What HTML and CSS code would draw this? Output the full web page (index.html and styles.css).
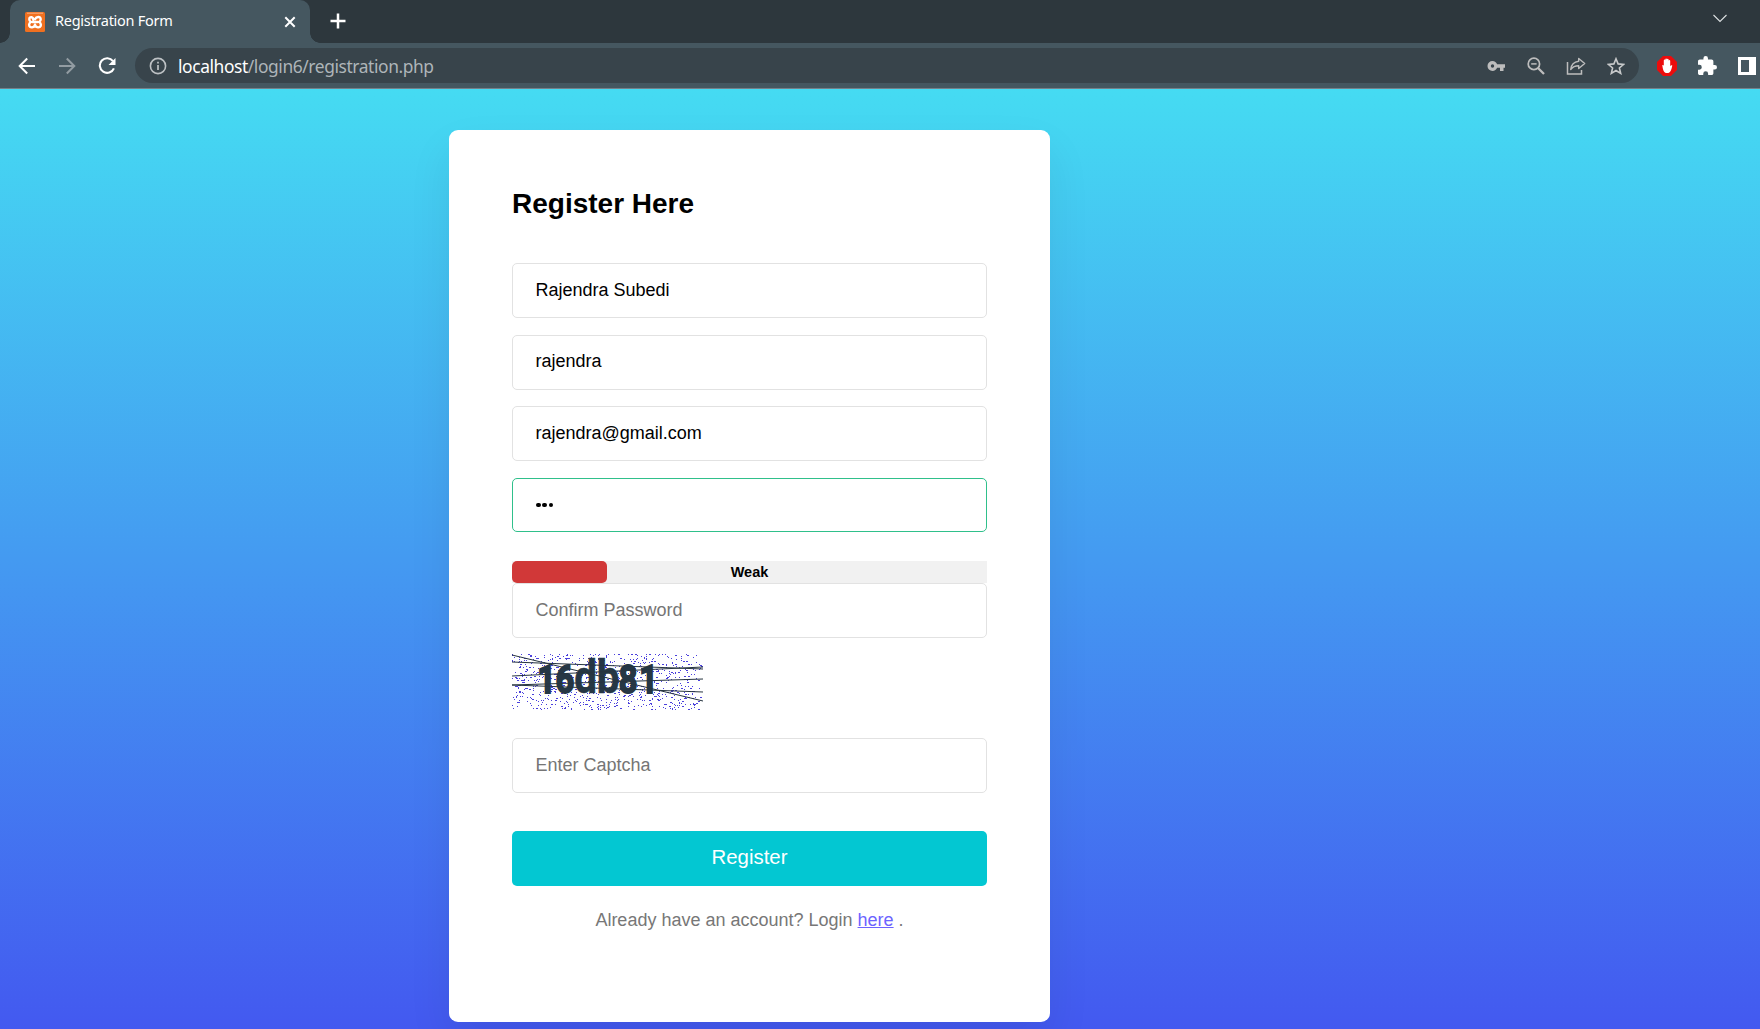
FILE: index.html
```html
<!DOCTYPE html>
<html lang="en">
<head>
<meta charset="utf-8">
<title>Registration Form</title>
<link rel="stylesheet" href="styles.css">
</head>
<body>
<header class="browser">
  <div class="tabstrip">
    <div class="tab">
      <svg class="favicon" width="20" height="20" viewBox="0 0 20 20"><rect width="20" height="20" rx="1.5" fill="#f07020"/><path d="M2 1.2h16" stroke="#f7ae80" stroke-width="1"/><path d="M8.200 7.600C8.800 5.200 4.300 4 4.300 7.200c0 1.500.8 2.300 1.600 2.800-.9.500-1.800 1.300-1.800 2.800 0 3.800 5.900 3 5.900-.2 0 3.200 5.900 4 5.900.2 0-1.500-.9-2.300-1.800-2.800.8-.5 1.600-1.300 1.600-2.800 0-3.200-4.500-2.700-5.700 0M7.500 10h5" fill="none" stroke="#fff" stroke-width="2.400" stroke-linecap="round" stroke-linejoin="round"/></svg>
      <span class="tab-title">Registration Form</span>
      <svg class="tab-close" width="12" height="12" viewBox="0 0 12 12"><path d="M1.300 1.300l9.400 9.400M10.700 1.300l-9.400 9.400" stroke="#fff" stroke-width="2"/></svg>
    </div>
    <svg class="new-tab" width="16" height="16" viewBox="0 0 16 16"><path d="M8 .5v15M.5 8h15" stroke="#fff" stroke-width="2.500"/></svg>
    <svg class="tab-search" width="14" height="9" viewBox="0 0 14 9"><path d="M.5 1l6.500 6.500L13.500 1" fill="none" stroke="#dde1e3" stroke-width="1.100"/></svg>
  </div>
  <div class="toolbar">
    <svg class="back" width="18" height="18" viewBox="0 0 18 18"><path d="M17 9H2M9.200 1.500L1.700 9l7.500 7.500" fill="none" stroke="#fff" stroke-width="2"/></svg>
    <svg class="forward" width="18" height="18" viewBox="0 0 18 18"><path d="M1 9h15M8.800 1.500L16.300 9l-7.500 7.500" fill="none" stroke="#929ca2" stroke-width="2"/></svg>
    <svg class="reload" width="18" height="18" viewBox="0 0 18 18"><path d="M15 4.200A7.300 7.300 0 1 0 15.900 11.300" fill="none" stroke="#fff" stroke-width="2.100"/><path d="M17.500 1v7h-7z" fill="#fff"/></svg>
    <div class="address">
      <svg width="18" height="18" viewBox="0 0 18 18"><circle cx="9" cy="9" r="7.600" fill="none" stroke="#bdc1c4" stroke-width="1.600"/><path d="M9 8v5M9 4.700v1.700" stroke="#bdc1c4" stroke-width="1.700"/></svg>
      <span class="url"><b>localhost</b>/login6/registration.php</span>
      <svg class="key" width="18" height="12" viewBox="0 0 18 12"><path d="M5.500 1a5 5 0 0 0 0 10c2.200 0 3.900-1.300 4.600-3.200H13V11h3.500V7.800H18V4.200h-7.900C9.400 2.300 7.700 1 5.500 1zm0 3.300a1.700 1.700 0 1 1 0 3.400 1.700 1.700 0 0 1 0-3.400z" fill="#bdbdbd" fill-rule="evenodd"/></svg>
      <svg class="magnify" width="18" height="18" viewBox="0 0 18 18"><circle cx="6.900" cy="6.900" r="5.700" fill="none" stroke="#bdbdbd" stroke-width="1.700"/><path d="M11 11l6 6" stroke="#bdbdbd" stroke-width="2.300"/><path d="M4.200 6.900h5.400" stroke="#bdbdbd" stroke-width="1.500"/></svg>
      <svg class="share" width="20" height="18" viewBox="0 0 20 18"><path d="M1.500 5v12h14v-4" fill="none" stroke="#bdbdbd" stroke-width="1.500"/><path d="M12.700 1.500l6 5-6 5V8.800c-3.900 0-6.200 1.300-8 3.700.5-4.600 3.200-7.700 8-8.300z" fill="none" stroke="#bdbdbd" stroke-width="1.400" stroke-linejoin="round"/></svg>
      <svg class="star" width="18" height="18" viewBox="0 0 18 18"><path d="M9 1.800l2.100 5.100 5.500.5-4.200 3.600 1.300 5.400L9 13.500l-4.700 2.900L5.600 11 1.400 7.400l5.500-.5z" fill="none" stroke="#c7c9ca" stroke-width="1.600"/></svg>
    </div>
    <svg class="blocker" width="20" height="20" viewBox="0 0 20 20"><path d="M6 0h8l6 6v8l-6 6H6l-6-6V6z" fill="#ec0c0c"/><path d="M5.300 9.200c.7-.5 1.300-.1 1.500.5V4.400c0-1.100 1.500-1.100 1.500 0V3.300c0-1.200 1.600-1.200 1.600 0v.3c0-1.300 1.700-1.300 1.700 0v1.200c0-1.100 1.600-1.100 1.600 0v5.400c.5-1 1.300-1.300 2.100-.8-.7 3.600-1.700 7.600-5.100 7.600-3.700 0-4.300-3.800-4.900-7.800z" fill="#fff"/></svg>
    <svg class="puzzle" width="19" height="19" viewBox="2 1 21 21"><path d="M20.500 11H19V7c0-1.100-.9-2-2-2h-4V3.500a2.500 2.500 0 0 0-5 0V5H4c-1.100 0-2 .9-2 2v3.800h1.500a2.700 2.700 0 0 1 0 5.400H2V20c0 1.100.9 2 2 2h3.800v-1.500a2.700 2.700 0 0 1 5.400 0V22H17c1.100 0 2-.9 2-2v-4h1.500a2.500 2.500 0 0 0 0-5z" fill="#fff"/></svg>
    <svg class="panel" width="18" height="18" viewBox="0 0 18 18"><path d="M0 0h18v18H0zM3 3v12h8V3z" fill="#fff" fill-rule="evenodd"/></svg>
  </div>
</header>
<main class="page">
  <form class="card">
    <h1>Register Here</h1>
    <input class="field" type="text" value="Rajendra Subedi">
    <input class="field" type="text" value="rajendra">
    <input class="field" type="text" value="rajendra@gmail.com">
    <div class="field active"><i></i><i></i><i></i></div>
    <div class="strength"><div class="strength-fill"></div><span>Weak</span></div>
    <input class="field confirm" type="text" placeholder="Confirm Password">
    <svg class="captcha" width="191" height="57" viewBox="0 0 191 57">
      <g id="noise"></g>
      <text class="code" transform="scale(.86 1)" y="39" x="29.500 50.500 72.500 98.500 124 148">16<tspan class="tall">db</tspan>81</text>
      <path class="strokes" d="M0 1l191 46M0 8l191 7M0 22l191-9M0 31l191 7M0 31l191-6"/>
    </svg>
    <input class="field enter" type="text" placeholder="Enter Captcha">
    <button class="submit" type="button">Register</button>
    <p>Already have an account? Login <a href="#">here</a> .</p>
  </form>
</main>
<script src="captcha.js"></script>
</body>
</html>
```
FILE: styles.css
```css
* { box-sizing: border-box; }
body { margin: 0; height: 1029px; overflow: hidden; display: flex; flex-direction: column; font-family: "Liberation Sans", Arial, sans-serif; }
svg { display: block; flex: none; }
.browser { flex: none; height: 89px; background: #455760; border-bottom: 1px solid #74818a; font-family: "Noto Sans", "Open Sans", sans-serif; }
.tabstrip { height: 43px; background: #2d373d; display: flex; align-items: flex-start; padding-left: 10px; }
.tab { position: relative; width: 300px; height: 43px; padding: 0 14px 0 15px; background: #455760; border-radius: 10px 10px 0 0; display: flex; align-items: center; color: #fff; }
.tab::before, .tab::after { content: ""; position: absolute; bottom: 0; width: 10px; height: 10px; }
.tab::before { left: -10px; background: radial-gradient(circle at 0 0, transparent 9.500px, #455760 10px); }
.tab::after { right: -10px; background: radial-gradient(circle at 100% 0, transparent 9.500px, #455760 10px); }
.tab-title { margin: -3px auto 0 10px; font-size: 14.500px; letter-spacing: -.28px; }
.new-tab { margin: 13px 0 0 19.500px; }
.tab-search { margin: 14px 33px 0 auto; }
.toolbar { height: 45px; display: flex; align-items: center; padding-left: 18px; }
.forward { margin-left: 22px; }
.reload { margin-left: 22px; }
.address { margin-left: 19px; width: 1504px; height: 35px; border-radius: 18px; background: #38444b; display: flex; align-items: center; padding: 0 14px 0 14px; }
.url { margin: 0 auto 0 11px; font-size: 17.400px; letter-spacing: -.41px; color: #aeb5b9; }
.url b { color: #fff; font-weight: 400; }
.magnify { margin-left: 22px; }
.share { margin-left: 21px; }
.star { margin-left: 21px; }
.blocker { margin-left: 18px; }
.puzzle { margin-left: 21px; }
.panel { margin-left: 21px; }
.page { flex: 1; background: linear-gradient(#45dbf2, #4359f0); padding: 41px 0 0 449px; }
.card { width: 601px; height: 892px; background: #fff; border-radius: 9px; box-shadow: 0 20px 45px rgba(0,0,0,.07); padding: 57px 63px; display: flex; flex-direction: column; }
h1 { margin: 0 0 43px; font-size: 28px; line-height: 33px; }
.field { width: 475px; height: 55px; flex: none; border: 1px solid #e2e2e2; border-radius: 5px; padding: 0 22.500px 1px; margin: 0 0 16.700px; font: 18px "Liberation Sans", Arial, sans-serif; color: #000; background: #fff; outline: none; }
.field::placeholder { color: #757575; opacity: 1; }
.active { height: 54px; border-color: #2fc08b; display: flex; align-items: center; gap: 1.800px; padding: 0 23px 0; margin-bottom: 29px; }
.active i { width: 4.600px; height: 4.600px; border-radius: 50%; background: #000; }
.strength { position: relative; height: 22px; flex: none; background: #f1f1f1; display: flex; align-items: center; justify-content: center; font-size: 14.500px; font-weight: 700; }
.strength-fill { position: absolute; left: 0; top: 0; width: 95px; height: 22px; border-radius: 5px; background: #d13838; }
.confirm { margin-bottom: 16px; }
.captcha { margin-bottom: 27px; overflow: visible; }
.code { font: 700 38px Roboto, sans-serif; fill: #263745; stroke: #263745; stroke-width: 1.800; }
.tall { font-size: 47px; stroke-width: .6; }
.strokes { fill: none; stroke: #26343f; stroke-width: 1; }
.enter { margin-bottom: 38px; }
.submit { flex: none; height: 55px; border: 0; border-radius: 5px; background: #03c7d2; color: #fff; font: 20.400px "Liberation Sans", Arial, sans-serif; padding: 0 0 2px; }
p { margin: 24px 0 0; font-size: 18px; line-height: 21px; text-align: center; color: #777; }
a { color: #6c63ff; }
```
FILE: captcha.js
```js
// Speckle the captcha background with blue dots, some of them doubled.
let seed = 7;
const rand = () => (seed = (seed * 16807) % 2147483647) / 2147483647;
let d = "";
for (let i = 0; i < 850; i++) {
  const w = rand() < 0.2 ? 2 : 1;
  d += `M${Math.floor(rand() * 190)} ${Math.floor(rand() * 56)}h${w}v1h-${w}z`;
}
document.getElementById("noise").innerHTML = `<path d="${d}" fill="#4a40dc"/>`;
```
